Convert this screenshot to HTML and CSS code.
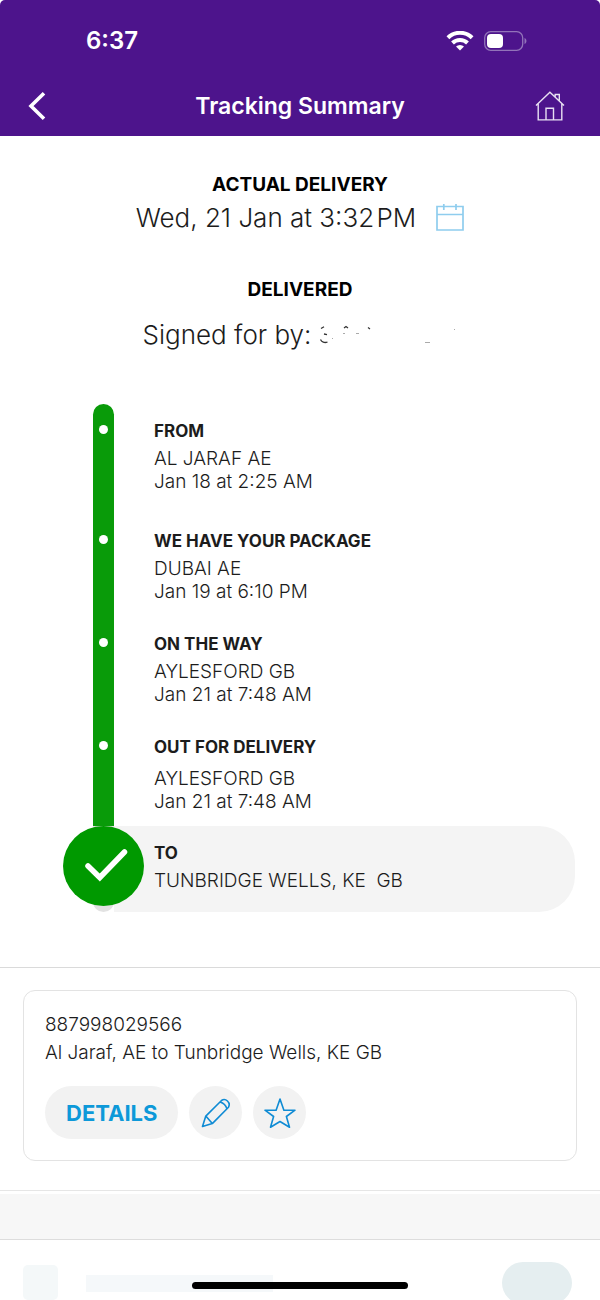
FILE: index.html
```html
<!DOCTYPE html>
<html lang="en">
<head>
  <meta charset="UTF-8">
  <meta name="viewport" content="width=device-width, initial-scale=1.0">
  <title>Tracking Summary</title>
  <link rel="stylesheet" href="styles.css">
</head>
<body>
  <div class="app">
    <header class="header">
      <div class="status-bar">
        <span class="clock">6:37</span>
        <div class="status-icons">
          <svg width="28" height="20" viewBox="0 0 28 20" fill="none" stroke="#fff" stroke-width="4">
            <path d="M1.900 6.700a17.300 17.300 0 0 1 24.200 0"/>
            <path d="M6.500 12a10.700 10.700 0 0 1 15 0"/>
            <path d="M14 19.500l-4-4a5.800 5.800 0 0 1 8 0z" fill="#fff" stroke="none"/>
          </svg>
          <svg width="43" height="20" viewBox="0 0 43 20">
            <rect x=".7" y=".7" width="38" height="18.600" rx="6" fill="none" stroke="#9273b9" stroke-width="1.300"/>
            <rect x="3" y="3" width="16" height="14" rx="4" fill="#fff"/>
            <path d="M40.500 7v6c2.600-.8 2.600-5.200 0-6z" fill="#9273b9"/>
          </svg>
        </div>
      </div>
      <nav class="nav-bar">
        <button class="nav-button" aria-label="Back">
          <svg width="18" height="30" viewBox="0 0 18 30" fill="none" stroke="#fff" stroke-width="3.600">
            <path d="M16 2.200L3 15l13 12.800"/>
          </svg>
        </button>
        <h1 class="title">Tracking Summary</h1>
        <button class="nav-button nav-home" aria-label="Home">
          <svg width="30" height="30" viewBox="0 0 30 30" fill="none" stroke="#e8e0f2" stroke-width="1.400">
            <path d="M1 14.500L14.900 1.200 29 14.500M3.200 12.800v16.100h23.600V12.800M11 28.900V17.200h7.500v11.700M20.200 5.700V3.500h4.100v6"/>
          </svg>
        </button>
      </nav>
    </header>

    <main>
      <section class="summary">
        <h2 class="label">ACTUAL DELIVERY</h2>
        <p class="value value-date">
          <span>Wed, 21 Jan at 3:32&#8202;PM</span>
          <button class="calendar-button" aria-label="Add to calendar">
            <svg width="28" height="28" viewBox="0 0 28 28" fill="none" stroke="#8fcdee" stroke-width="1.700">
              <path d="M1 2.500h26V26H1zM1 10.500h26M7.800 0v6M20 0v6"/>
            </svg>
          </button>
        </p>
        <h2 class="label">DELIVERED</h2>
        <p class="value value-signed">
          <span>Signed for by:</span>
          <svg class="signature" width="138" height="20" viewBox="0 0 138 20" fill="none" stroke="#333" stroke-width="1.300">
            <path d="M2 3.500l3-1.800M5 9l3 .6M1.500 14.500c1 2.500 4 3.700 7 2.500"/>
            <path d="M25 3l2-1.500 2 1.500M49 2.500l2 1.500" stroke-width="1.200"/>
            <path d="M24 8.500h2M13 13.500h1M37 8.500h3M106 17.500h5M135 4.500h1" stroke="#aaa" stroke-width="1"/>
          </svg>
        </p>
      </section>

      <ol class="timeline">
        <li class="stop stop-first">
          <div class="rail"><span class="dot"></span></div>
          <div class="stop-text">
            <h3>FROM</h3>
            <p>AL JARAF AE</p>
            <p>Jan 18 at 2:25 AM</p>
          </div>
        </li>
        <li class="stop">
          <div class="rail"><span class="dot"></span></div>
          <div class="stop-text">
            <h3>WE HAVE YOUR PACKAGE</h3>
            <p>DUBAI AE</p>
            <p>Jan 19 at 6:10 PM</p>
          </div>
        </li>
        <li class="stop">
          <div class="rail"><span class="dot"></span></div>
          <div class="stop-text">
            <h3>ON THE WAY</h3>
            <p>AYLESFORD GB</p>
            <p>Jan 21 at 7:48 AM</p>
          </div>
        </li>
        <li class="stop stop-out">
          <div class="rail"><span class="dot"></span></div>
          <div class="stop-text">
            <h3>OUT FOR DELIVERY</h3>
            <p>AYLESFORD GB</p>
            <p>Jan 21 at 7:48 AM</p>
          </div>
        </li>
        <li class="stop stop-to">
          <div class="arrival">
            <span class="rail-end"></span>
            <svg class="check" width="81" height="80" viewBox="0 0 81 80">
              <ellipse cx="40.500" cy="40" rx="40.500" ry="40" fill="#009900"/>
              <path d="M25 40L36.800 51.500 61.500 26" fill="none" stroke="#fff" stroke-width="5.500" stroke-linecap="round"/>
            </svg>
          </div>
          <div class="stop-text">
            <h3>TO</h3>
            <p>TUNBRIDGE WELLS, KE&nbsp; GB</p>
          </div>
        </li>
      </ol>

      <section class="shipment">
        <div class="card">
          <p>887998029566</p>
          <p>Al Jaraf, AE to Tunbridge Wells, KE GB</p>
          <div class="actions">
            <button class="details-button">DETAILS</button>
            <button class="round-button" aria-label="Edit nickname">
              <svg width="30" height="30" viewBox="0 0 30 30" fill="none" stroke="#0f8bd4" stroke-width="1.600" stroke-linejoin="round">
                <path d="M1.500 28.500l3.300-10.400L20.500 2.500c4-3 9.500 2 7 6.700L11.300 25.600zM4.800 18.100l6.500 7.500M19 4c3.500 1 6 3.500 7 7"/>
              </svg>
            </button>
            <button class="round-button" aria-label="Add to watch list">
              <svg width="32" height="30" viewBox="0 0 32 30" fill="none" stroke="#0f8bd4" stroke-width="1.600" stroke-linejoin="round">
                <path d="M16 1l3.900 11.200H31l-8.600 6.300 3.100 10.700-9.500-5.700-9.500 5.700 3.100-10.700L1 12.200h11.100z"/>
              </svg>
            </button>
          </div>
        </div>
      </section>
      <div class="divider"></div>
    </main>

    <div class="skeleton">
      <span class="skeleton-icon"></span>
      <span class="skeleton-line"></span>
      <span class="skeleton-pill"></span>
    </div>
    <div class="home-indicator"></div>
  </div>
</body>
</html>
```
FILE: styles.css
```css
* {
  box-sizing: border-box;
}
body {
  margin: 0;
  background-color: #ffffff;
  font-family: Inter, "Liberation Sans", sans-serif;
  color: #1c1c1c;
}
h1, h2, h3, p, ol {
  margin: 0;
  padding: 0;
}
button {
  border: none;
  padding: 0;
  font-family: inherit;
  background: none;
  cursor: pointer;
}
svg {
  display: block;
}
.app {
  position: relative;
  display: flex;
  flex-direction: column;
  height: 100vh;
  overflow: hidden;
}

/* header */
.header {
  background-color: #4d148c;
  border-radius: 5px 5px 0 0;
  color: #ffffff;
}
.status-bar {
  display: flex;
  align-items: center;
  justify-content: space-between;
  height: 75px;
  padding: 6px 73px 0 86px;
}
.clock {
  font-size: 24px;
  font-weight: 600;
}
.status-icons {
  display: flex;
  gap: 10px;
}
.nav-bar {
  display: grid;
  grid-template-columns: 1fr auto 1fr;
  align-items: center;
  height: 61px;
  padding: 0 35px 0 28px;
}
.nav-bar .title {
  padding-left: 7px;
}
.nav-button {
  justify-self: start;
}
.nav-home {
  justify-self: end;
}
.title {
  font-size: 23px;
  font-weight: 600;
}

/* delivery summary */
.summary {
  padding: 37px 20px 0;
  text-align: center;
}
.label {
  color: #000000;
  font-size: 19px;
  font-weight: 700;
  line-height: 24px;
}
.value {
  display: flex;
  justify-content: center;
  align-items: center;
  font-size: 26px;
  font-weight: 300;
  line-height: 34px;
}
.value-date {
  gap: 20px;
  margin: 4px 0 43px;
}
.value-signed {
  gap: 8px;
  margin-top: 16px;
}

/* timeline */
.timeline {
  list-style: none;
  margin: 52px 25px 55px 63px;
}
.stop {
  display: grid;
  grid-template-columns: 81px 1fr;
  column-gap: 10px;
}
.rail {
  width: 21px;
  margin: 0 auto;
  background-color: #099b09;
}
.dot {
  display: block;
  width: 9px;
  height: 9px;
  margin: 4px auto 0;
  border-radius: 50%;
  background-color: #ffffff;
}
.stop-text {
  padding-bottom: 31px;
}
.stop-text h3 {
  margin-bottom: 6px;
  font-size: 17px;
  font-weight: 700;
  line-height: 20px;
}
.stop-text p {
  font-size: 19px;
  font-weight: 300;
  line-height: 23px;
}
.stop-first .rail {
  padding-top: 17px;
  border-radius: 11px 11px 0 0;
}
.stop-first .stop-text {
  padding: 17px 0 38px;
}
.stop-out .stop-text {
  padding-bottom: 13px;
}
.stop-out .stop-text h3 {
  margin-bottom: 10px;
}
.arrival {
  display: grid;
  z-index: 1;
}
.rail-end {
  grid-area: 1 / 1;
  justify-self: center;
  width: 21px;
  border-radius: 0 0 11px 11px;
  background-color: #e2e2e2;
}
.check {
  grid-area: 1 / 1;
}
.stop-to .stop-text {
  margin-left: -40px;
  padding: 17px 0 20px 40px;
  border-radius: 0 36px 36px 0;
  background-color: #f4f4f4;
}

/* shipment card */
.shipment {
  padding: 22px 23px 29px;
  border-top: 1px solid #dadada;
  border-bottom: 1px solid #e6e6e6;
}
.card {
  padding: 20px 21px 21px;
  border: 1px solid #e3e3e3;
  border-radius: 12px;
}
.card p {
  font-size: 19px;
  font-weight: 300;
  line-height: 28px;
}
.actions {
  display: flex;
  gap: 11px;
  margin-top: 19px;
}
.details-button {
  height: 53px;
  padding: 0 21px;
  border-radius: 27px;
  background-color: #f2f2f2;
  color: #0d99d9;
  font-size: 22px;
  font-weight: 700;
}
.round-button {
  display: flex;
  align-items: center;
  justify-content: center;
  width: 53px;
  height: 53px;
  border-radius: 50%;
  background-color: #f2f2f2;
}
.divider {
  height: 46px;
  margin-top: 3px;
  border-bottom: 1px solid #dddddd;
  background-color: #f7f7f7;
}

/* loading row */
.skeleton {
  display: flex;
  flex: 1;
  align-items: flex-start;
  min-height: 0;
  padding: 22px 28px 0 23px;
}
.skeleton-icon {
  width: 35px;
  height: 35px;
  margin-top: 3px;
  border-radius: 5px;
  background-color: #f4f8f9;
}
.skeleton-line {
  width: 187px;
  height: 17px;
  margin: 13px auto 0 28px;
  background-color: #f5f8fa;
}
.skeleton-pill {
  width: 70px;
  height: 42px;
  border-radius: 21px;
  background-color: #e5eef0;
}
.home-indicator {
  position: absolute;
  bottom: 11px;
  left: 50%;
  width: 36%;
  height: 7px;
  border-radius: 4px;
  background-color: #000000;
  transform: translateX(-50%);
}
```
